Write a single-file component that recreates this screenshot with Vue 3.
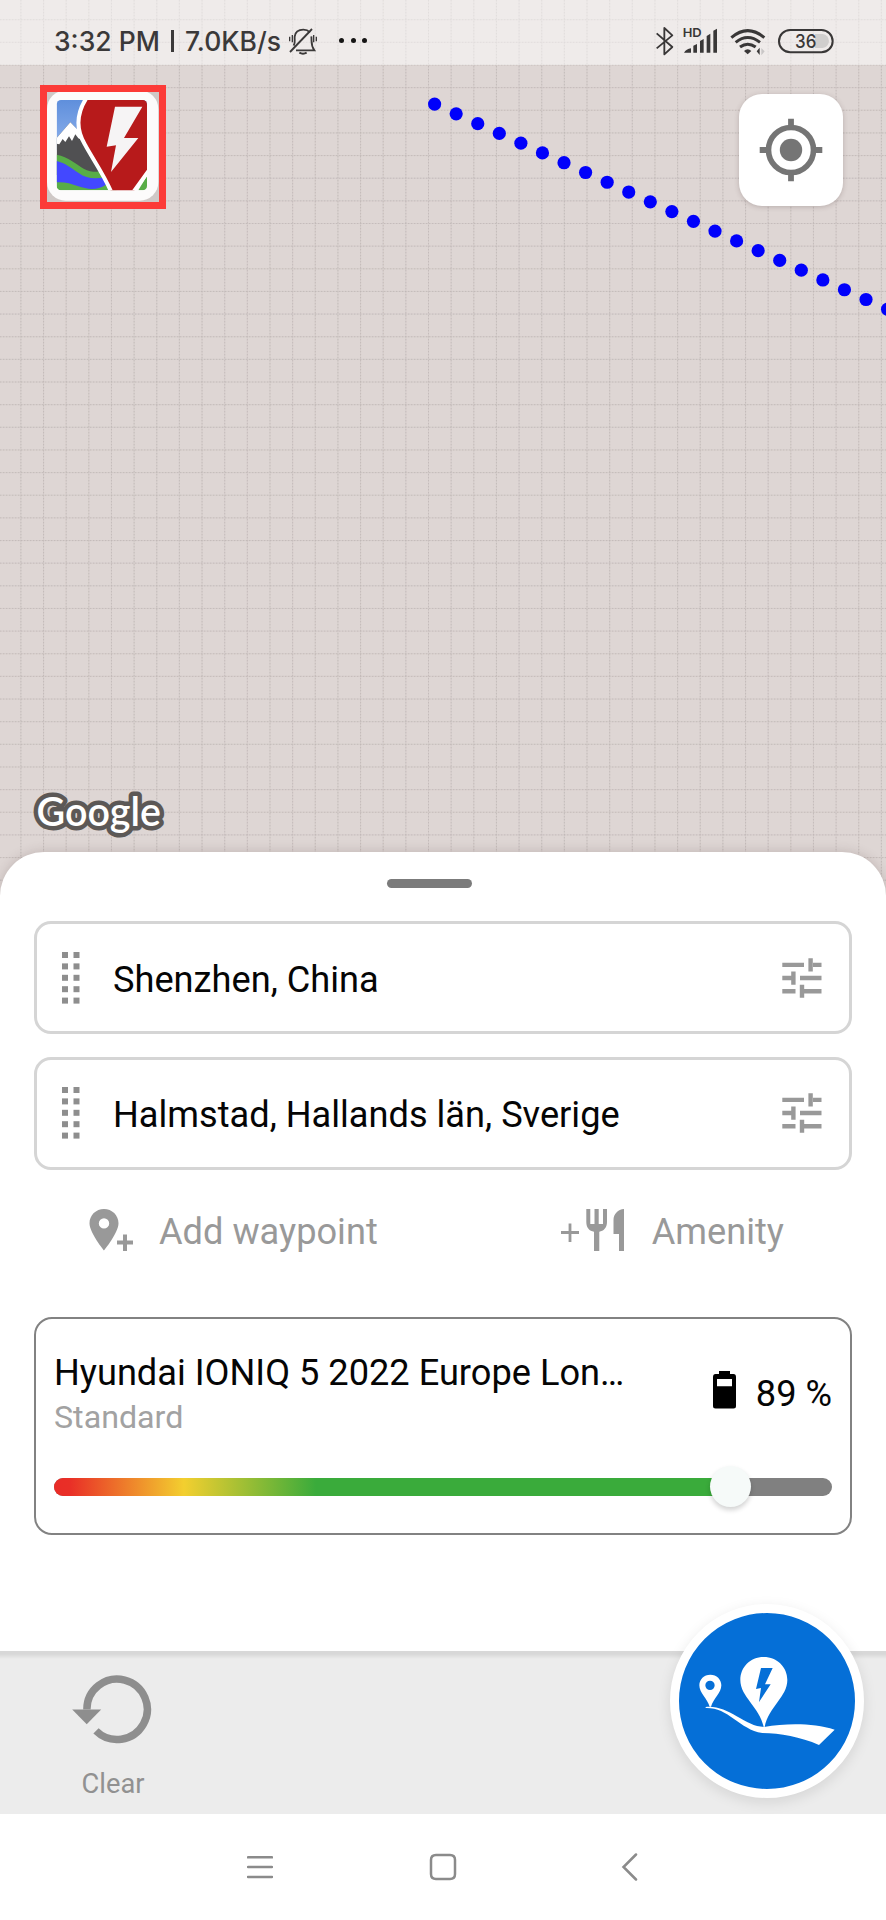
<script setup>
const step = 22.645
const columns = Array.from({ length: 40 }, (_, i) => 20.9 + (i - 1) * step)
const rows = Array.from({ length: 41 }, (_, i) => 19.7 + i * step)
const route = Array.from({ length: 22 }, (_, i) => ({ x: 434.6 + i * 21.57, y: 104.1 + i * 9.77 }))
const waypoints = ['Shenzhen, China', 'Halmstad, Hallands län, Sverige']
const charge = 89
</script>

<template>
  <div class="screen">
    <section class="map">
      <svg class="tiles" width="886" height="910" viewBox="0 0 886 910">
        <g stroke="#cdc5c3" stroke-width="1">
          <g v-for="(x, i) in columns" :key="'c' + i">
            <line :x1="x" :x2="x" y1="0" y2="910" stroke-opacity=".5" />
            <line :x1="x" :x2="x" y1="0" y2="910" stroke="#b9b1af" stroke-opacity=".6" stroke-dasharray="1.3 1.7" />
          </g>
          <g v-for="(y, i) in rows" :key="'r' + i">
            <line x1="0" x2="886" :y1="y" :y2="y" stroke-opacity=".5" />
            <line x1="0" x2="886" :y1="y" :y2="y" stroke="#b9b1af" stroke-opacity=".6" stroke-dasharray="1.3 1.7" />
          </g>
        </g>
        <circle v-for="(p, i) in route" :key="i" :cx="p.x" :cy="p.y" r="6.6" fill="#0000fb" />
        <text x="36.5" y="825.5" class="google" textLength="124.500" lengthAdjust="spacingAndGlyphs">Google</text>
      </svg>

      <header class="status">
        <span class="time">3:32 PM</span>
        <i class="bar"></i>
        <span class="speed">7.0KB/s</span>
        <svg class="bell" width="30" height="28" viewBox="864 80 90 84" fill="none" stroke="#3b3939" stroke-width="5.5">
          <path d="M881 136C887 128 883 119 884 109C886 93 897 88 910 88C919 88 925 91 930 96M934 108C936 124 931 133 943 150H888" />
          <path d="M870 155L936 86" />
          <path d="M898 157Q909 163 920 157" stroke-width="6" />
          <path d="M869 109v14M877 104v22M941 104v22M949 109v14" stroke-width="4" />
        </svg>
        <span class="more"><i></i><i></i><i></i></span>
        <svg class="sys" width="190" height="40" viewBox="30 30 570 120" fill="none" stroke="#393737">
          <path d="M50 67L97 108L73 130V51L97 73L50 112" stroke-width="5.5" stroke-linejoin="round" />
          <text x="128" y="79" font-size="37" font-weight="600" textLength="57" lengthAdjust="spacingAndGlyphs" stroke="none" fill="#393737" class="sys-text">HD</text>
          <path d="M132 125C136 117 144 114 153 112V125ZM160 104L171 99V125H160ZM180 90L191 84V125H180ZM200 75L211 68V125H200ZM220 59L231 53V125H220Z" fill="#393737" stroke="none" />
          <path d="M274 80Q323 38 373 80" stroke-width="9" />
          <path d="M287 94Q323 65 360 94" stroke-width="9" />
          <path d="M300 108Q323 91 347 108" stroke-width="9" />
          <path d="M312 120Q323 109 334 120L323 130Z" fill="#393737" stroke="none" />
          <path d="M350 121L359 110V132Z" fill="#393737" stroke="none" />
          <path d="M364 111V133L374 121Z" fill="#c9c7c7" stroke="none" />
          <path d="M525 69H548Q565 72 567 90Q565 108 548 111H525Z" fill="#d0cecd" stroke="none" />
          <rect x="417" y="57" width="161" height="67" rx="33.5" stroke-width="6" />
          <text x="465" y="110" font-size="56" font-weight="500" textLength="64" lengthAdjust="spacingAndGlyphs" stroke="none" fill="#393737" class="sys-text">36</text>
        </svg>
      </header>

      <div class="controls">
        <svg class="logo" width="126" height="124" viewBox="30 30 378 372">
          <defs>
            <clipPath id="pic"><rect x="80" y="75" width="271" height="271" rx="13" /></clipPath>
            <linearGradient id="sky" x1="0" y1="0" x2="0" y2="1">
              <stop offset="0" stop-color="#5f8fdc" /><stop offset="1" stop-color="#8fb2ec" />
            </linearGradient>
          </defs>
          <rect x="50" y="51" width="338" height="330" fill="#cfc8c6" />
          <rect x="51" y="46" width="334" height="331" rx="56" fill="#fcfbfb" />
          <g clip-path="url(#pic)">
            <rect x="80" y="75" width="271" height="150" fill="url(#sky)" />
            <path d="M80 189L121 142L160 184L250 300L80 300Z" fill="#505052" />
            <path d="M80 189L121 142L150 172L158 196L145 190L136 178L126 198L117 184L106 201L98 192L88 208L80 206Z" fill="#fff" />
            <path d="M80 239C115 246 139 268 161 281C182 292 202 292 220 288L260 346H80Z" fill="#58ad47" />
            <path d="M80 258C106 264 123 279 146 294C170 312 197 313 226 306L232 326C205 347 174 344 145 334C122 325 101 320 80 322Z" fill="#4348ff" />
            <path d="M325 346L351 302V346Z" fill="#58ad47" />
            <path d="M170 68C137 119 140 168 165 209C183 244 222 298 245 354H308L360 282V68Z" fill="#b71a1b" stroke="#fff" stroke-width="12" />
          </g>
          <path d="M255 95H337L282 189H325L243 291L258 211L230 215Z" fill="#f6f4f5" />
          <rect x="40.5" y="40.5" width="357" height="351" fill="none" stroke="#fc3b38" stroke-width="21" />
        </svg>
        <button class="locate">
          <svg width="64" height="64" viewBox="-32 -32 64 64">
            <circle r="22.5" fill="none" stroke="#757575" stroke-width="5.6" />
            <circle r="11.2" fill="#757575" />
            <path d="M0-31.3v8M0 31.3v-8M-31.3 0h8M31.3 0h-8" stroke="#757575" stroke-width="5.8" />
          </svg>
        </button>
      </div>
    </section>

    <main class="sheet">
      <div class="handle"></div>
      <div v-for="place in waypoints" :key="place" class="field">
        <svg class="grip" width="18" height="52" viewBox="0 0 18 52" fill="#8e8e8e">
          <template v-for="n in 5" :key="n">
            <rect x="0" :y="(n - 1) * 11.4" width="6" height="6" />
            <rect x="11.5" :y="(n - 1) * 11.4" width="6" height="6" />
          </template>
        </svg>
        <span class="place">{{ place }}</span>
        <svg class="tune" width="40" height="40" viewBox="0 0 40 40" stroke="#999" stroke-width="4.4">
          <path d="M.3 6.9H22M31 6.9H39.5M.3 20H11M18 20H39.5M.3 33.2H13.5M20 33.2H39.5" />
          <path d="M28.6.3V13.4M11.4 13.6V26.7M20 26.7V39.8" />
        </svg>
      </div>

      <div class="actions">
        <div class="action">
          <svg width="45" height="44" viewBox="0 0 45 44" fill="#999">
            <path fill-rule="evenodd" d="M15 1C7 1 .5 7.2.5 15.3C.5 25 15 42.5 15 42.5S29.500 25 29.500 15.300C29.500 7.200 23 1 15 1ZM15 10.200A5.200 5.200 0 1 1 15 20.600A5.200 5.200 0 1 1 15 10.200Z" />
            <path d="M28 34.500H44M36 26.500V43" stroke="#999" stroke-width="4" />
          </svg>
          <span class="add">Add waypoint</span>
        </div>
        <div class="action amenity">
          <svg width="64" height="44" viewBox="0 0 64 44" fill="#999">
            <path d="M0 24.500H18M9 15.500V34" stroke="#999" stroke-width="2.800" />
            <path d="M25.300 1H29.300V16H33.500V1H37.700V16H42V1H46V14C46 20 42.500 23 38.300 23.700V43H33V23.700C28.500 23 25.300 20 25.300 14Z" />
            <path d="M63 1V43H58V26H52.500V12C52.500 6 57 1.500 63 1Z" />
          </svg>
          <span>Amenity</span>
        </div>
      </div>

      <section class="vehicle">
        <div class="summary">
          <div class="names">
            <div class="model">Hyundai IONIQ 5 2022 Europe Lon…</div>
            <div class="variant">Standard</div>
          </div>
          <svg class="battery" width="23" height="38" viewBox="0 0 23 38">
            <path fill-rule="evenodd" d="M6 0H17V3H20.500Q23 3 23 6V35Q23 37.500 20.500 37.500H2.500Q0 37.500 0 35V6Q0 3 2.500 3H6ZM4 8V15.300H19V8Z" />
          </svg>
          <span class="percent">{{ charge }} %</span>
        </div>
        <div class="slider">
          <div class="fill" :style="{ width: charge + '%' }"></div>
          <div class="thumb" :style="{ left: `calc((100% - 41px) * ${charge / 100})` }"></div>
        </div>
      </section>
    </main>

    <footer class="toolbar">
      <div class="clear">
        <svg width="80" height="70" viewBox="0 0 80 70">
          <path d="M14.900 34.500A30.200 30.200 0 1 1 24 55.900" fill="none" stroke="#8e8e8e" stroke-width="7.500" />
          <path d="M.200 34.500H29.200L14.700 49.300Z" fill="#8e8e8e" />
        </svg>
        <span>Clear</span>
      </div>
      <button class="plan">
        <svg width="176" height="176" viewBox="116 69 528 528" fill="#fff">
          <path fill-rule="evenodd" d="M210 254C191 254 177 268 177 286C177 309 201 326 208 350H212C219 326 243 309 243 286C243 268 229 254 210 254ZM209 272A14 14 0 1 1 209 300A14 14 0 1 1 209 272Z" />
          <path fill-rule="evenodd" d="M370 201C329 201 300 232 300 270C300 321 357 350 370 411H373C385 350 441 321 441 270C441 232 411 201 370 201ZM362 234H397L374 283H391L356 336L362 294L347 297Z" />
          <path d="M196 351C232 348 259 362 289 379C319 396 342 410 371 411C440 399 520 399 583 419L536 465C480 440 420 430 366 429C330 424 308 405 281 387C254 367 229 353 196 354Z" />
        </svg>
      </button>
    </footer>

    <nav class="nav">
      <svg width="26" height="28" viewBox="0 0 26 28"><path d="M1 4.300H25M1 14H25M1 23.900H25" /></svg>
      <svg width="28" height="28" viewBox="0 0 28 28"><path d="M7 2H21Q26 2 26 7V21Q26 26 21 26H7Q2 26 2 21V7Q2 2 7 2Z" /></svg>
      <svg width="26" height="28" viewBox="0 0 26 28"><path d="M19 1.500L6.500 14L19 26.500" /></svg>
    </nav>
  </div>
</template>

<style scoped>
.screen {
  width: 886px;
  height: 1920px;
  display: flex;
  flex-direction: column;
  overflow: hidden;
  background: #fff;
  font-family: Roboto, "Liberation Sans", sans-serif;
}
button { border: 0; padding: 0; margin: 0; }
svg { display: block; flex: none; }
.map { position: relative; height: 910px; flex: none; background: #ded6d4; }
.tiles { position: absolute; left: 0; top: 0; }
.google {
  font-family: Lato, sans-serif;
  font-size: 39.500px;
  font-weight: 600;
  fill: #fff;
  stroke: #5c5856;
  stroke-width: 9px;
  stroke-linejoin: round;
  paint-order: stroke;
}
.status {
  position: relative;
  height: 65px;
  box-sizing: border-box;
  padding: 16px 0 0 54px;
  display: flex;
  align-items: center;
  background: rgba(255, 255, 255, .5);
  color: #3b3939;
  font: 500 26.500px/50px Inter, sans-serif;
  white-space: nowrap;
}
.time { width: 117px; }
.bar { width: 3px; height: 22px; background: #3b3939; }
.speed { width: 104px; margin-left: 11px; }
.bell { margin-left: -1px; }
.more { display: flex; gap: 6.700px; margin-left: 21px; }
.more i { width: 5px; height: 5px; border-radius: 50%; background: #161515; }
.sys { margin-left: 283px; }
.sys-text { font-family: Inter, sans-serif; }
.controls {
  position: relative;
  display: flex;
  justify-content: space-between;
  align-items: flex-start;
  padding: 20px 43px 0 40px;
}
.locate {
  width: 104px;
  height: 112px;
  margin-top: 9px;
  display: grid;
  place-items: center;
  background: #fff;
  border-radius: 23px;
  box-shadow: 0 1px 5px rgba(80, 60, 60, .25);
}
.sheet {
  position: relative;
  height: 799px;
  margin-top: -58px;
  flex: none;
  box-sizing: border-box;
  padding: 27px 34px 0;
  background: #fff;
  border-radius: 44px 44px 0 0;
  box-shadow: 0 0 12px rgba(80, 60, 60, .22);
}
.handle { width: 85px; height: 9px; margin: 0 0 33px 353px; border-radius: 5px; background: #7b7b7b; }
.field {
  height: 113px;
  margin-bottom: 22.500px;
  box-sizing: border-box;
  padding: 0 27px 0 25px;
  border: 3px solid #d5d5d5;
  border-radius: 17px;
  display: flex;
  align-items: center;
}
.place { flex: 1; margin-left: 33px; padding-top: 4px; font-size: 36.200px; line-height: 42px; color: #050505; }
.actions { display: flex; margin-top: 38px; height: 44px; color: #999; font-size: 36.200px; line-height: 44px; }
.action { display: flex; align-items: center; margin-left: 55px; }
.action span { margin-left: 25px; padding-top: 5px; }
.amenity { margin-left: auto; margin-right: 68px; }
.amenity span { margin-left: 27px; }
.vehicle {
  height: 218px;
  margin-top: 65px;
  box-sizing: border-box;
  border: 2px solid #828282;
  border-radius: 18px;
  padding: 31px 18px 0;
}
.summary { display: flex; height: 90px; align-items: flex-start; color: #050505; white-space: nowrap; }
.names { flex: 1; }
.model { font-size: 36.200px; line-height: 46px; }
.variant { font-size: 32.200px; line-height: 43px; color: #a2a2a2; }
.battery { margin: 21px 20px 0 0; }
.percent { font-size: 36.200px; line-height: 46px; margin-top: 21px; }
.slider { position: relative; height: 18px; margin-top: 38px; border-radius: 9px; background: #808080; }
.fill {
  height: 18px;
  border-radius: 9px 0 0 9px;
  background: linear-gradient(90deg, #e92c27 0, #e92f27 16px, #f3cf2f 130px, #3aab3b 262px);
}
.thumb {
  position: absolute;
  top: -12px;
  width: 41px;
  height: 41px;
  border-radius: 50%;
  background: #f6faf9;
  box-shadow: 0 3px 5px rgba(0, 0, 0, .18);
}
.toolbar {
  position: relative;
  height: 163px;
  flex: none;
  display: flex;
  justify-content: space-between;
  background: linear-gradient(#d8d8d8 0, #d8d8d8 3px, #ececec 8px);
}
.clear { width: 226px; padding-top: 24px; display: flex; flex-direction: column; align-items: center; color: #919191; font-size: 27.300px; line-height: 34px; }
.clear svg { margin-right: 2px; }
.clear span { margin-top: 22px; }
.plan {
  width: 194px;
  height: 194px;
  flex: none;
  box-sizing: border-box;
  margin: -47px 22px 0 0;
  border: 9px solid #fff;
  border-radius: 50%;
  background: #056fd7;
  box-shadow: 0 4px 14px rgba(0, 0, 0, .1);
}
.nav { height: 106px; flex: none; display: flex; align-items: center; padding-left: 247px; }
.nav svg { fill: none; stroke: #8b8b8b; stroke-width: 2.500; stroke-linecap: round; }
.nav svg + svg { margin-left: 156px; }
.nav svg + svg + svg { margin-left: 160px; }
</style>
